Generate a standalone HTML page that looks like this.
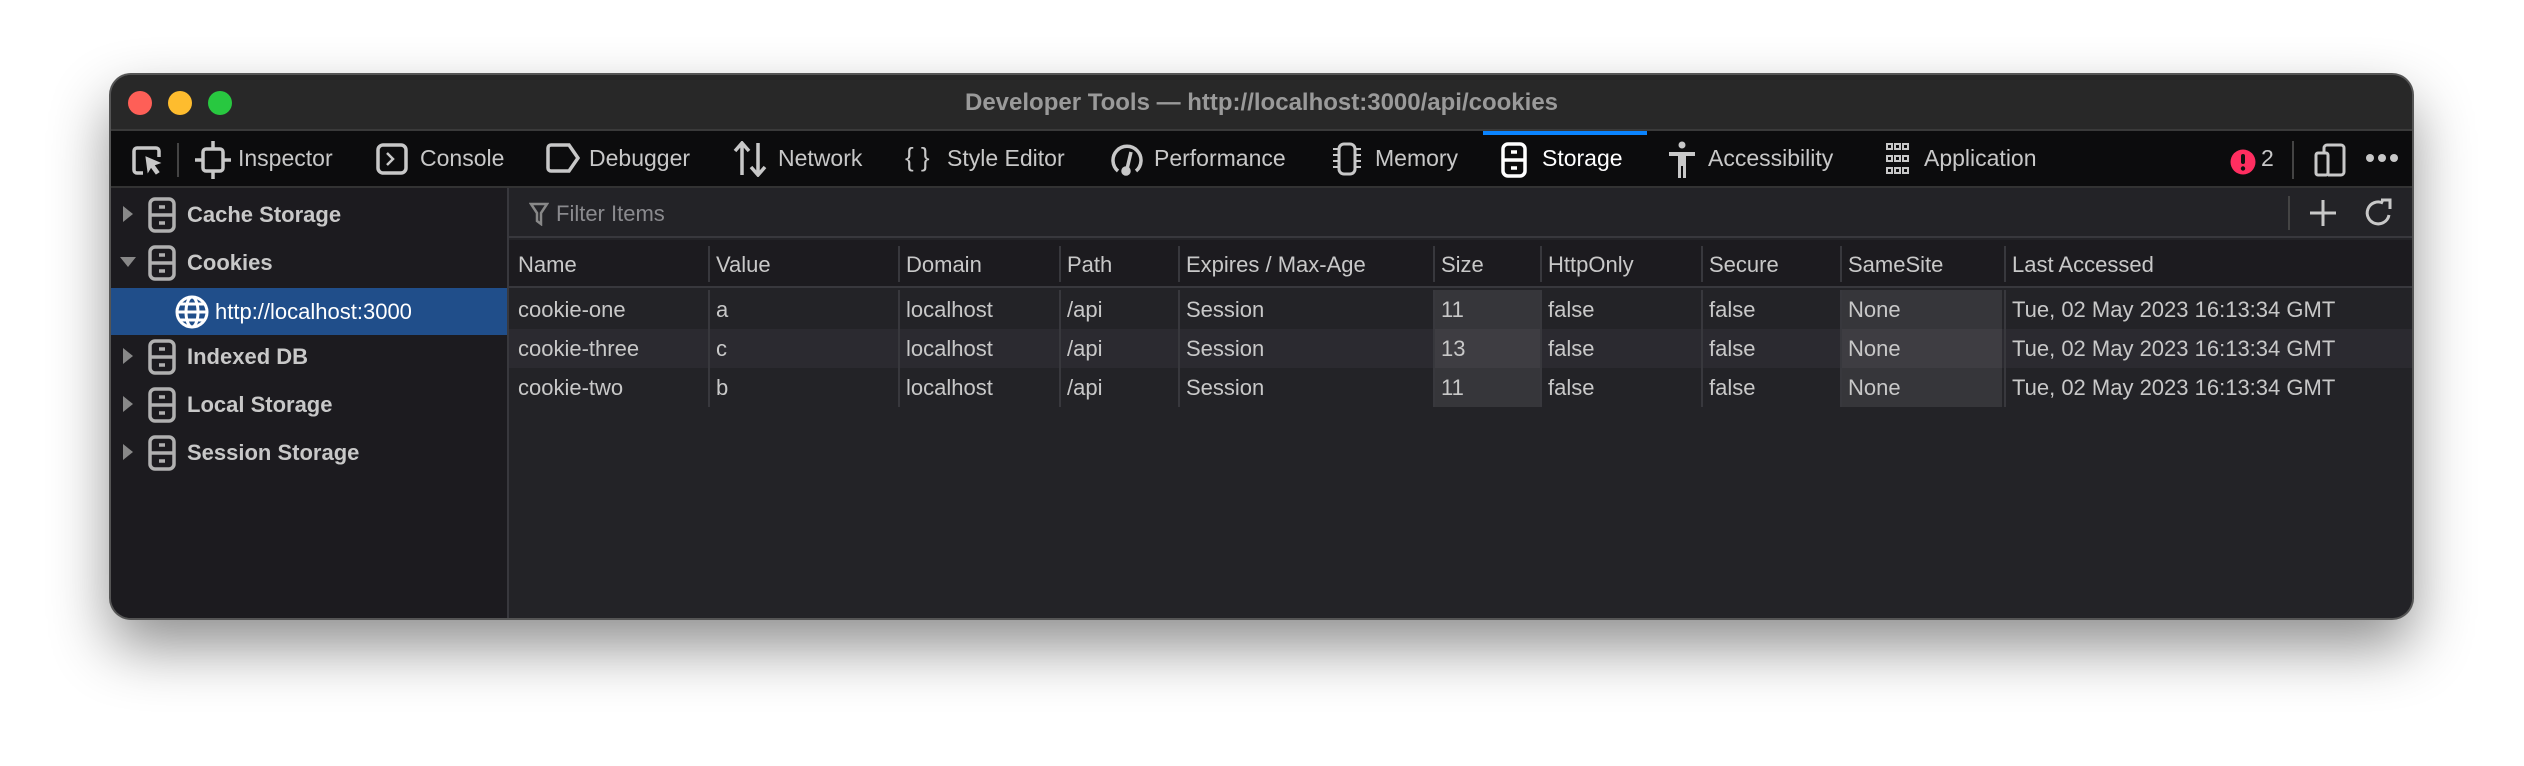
<!DOCTYPE html>
<html><head><meta charset="utf-8"><style>
*{margin:0;padding:0;box-sizing:border-box}
body{width:2524px;height:766px;background:#fff;position:relative;overflow:hidden;font-family:"Liberation Sans",sans-serif}
.win{position:absolute;left:111px;top:75px;width:2301px;height:543px;background:#232327;border-radius:20px;overflow:hidden;box-shadow:0 0 0 2px #555,0 28px 60px rgba(0,0,0,.45)}
.title{position:absolute;left:0;top:0;width:100%;height:56px;background:#282828;border-bottom:2px solid #3a3a3a}
.tl{position:absolute;top:16px;width:24px;height:24px;border-radius:50%}
.title .t{position:absolute;left:0;width:100%;top:14px;text-align:center;font-weight:bold;font-size:24px;color:#9a9a9a}
.tb{position:absolute;left:0;top:56px;width:100%;height:57px;background:#0c0c0d;border-bottom:2px solid #333}
.tab{position:absolute;top:14px;font-size:23px;color:#c8c8c8;white-space:nowrap}
.ic{position:absolute;top:12px}
.side{position:absolute;left:0;top:113px;width:398px;height:430px;background:#1c1b1f;border-right:2px solid #38383d}
.si{position:absolute;left:0;width:396px;height:46px;font-size:22px;font-weight:bold;color:#c8c8c8}
.si span{position:absolute;left:76px;top:10px}
.main{position:absolute;left:398px;top:113px;right:0;bottom:0;background:#232327}
.filter{position:absolute;left:0;top:0;width:100%;height:50px;border-bottom:2px solid #38383d}
.hdr{position:absolute;left:0;top:52px;width:100%;height:48px;background:#1c1b1f;border-bottom:2px solid #38383d}
.cell{position:absolute;font-size:22px;color:#c8c8c8;white-space:nowrap}
.row{position:absolute;left:0;width:100%;height:39px}
.sep{position:absolute;width:2px;background:#38383d}
</style></head><body>
<div class="win">
 <div class="title">
  <div class="tl" style="left:17px;background:#fe5f57"></div>
  <div class="tl" style="left:57px;background:#febc2e"></div>
  <div class="tl" style="left:97px;background:#28c840"></div>
  <div class="t">Developer Tools — http://localhost:3000/api/cookies</div>
 </div>
 <div class="tb">
  <div style="position:absolute;left:1372px;top:0;width:164px;height:4px;background:#0a84ff"></div>
  <svg class="ic" style="left:20px;top:14px" width="34" height="32" viewBox="0 0 34 32" fill="none" stroke="#c8c8c8" stroke-width="3.5"><path d="M12 28H6a3 3 0 0 1-3-3V6a3 3 0 0 1 3-3h19a3 3 0 0 1 3 3v6"/><path d="M15 12l14 6-6 2 5 7-3 2-5-7-3 5z" fill="#c8c8c8" stroke-width="1"/></svg>
  <div style="position:absolute;left:66px;top:12px;width:2px;height:34px;background:#444"></div>
  <svg class="ic" style="left:84px;top:10px" width="36" height="38" viewBox="0 0 36 38" fill="none" stroke="#c8c8c8" stroke-width="3.5"><rect x="8" y="8" width="20" height="22" rx="3"/><path d="M18 0v8M18 30v8M0 19h8M28 19h8"/></svg>
  <div class="tab" style="left:127px">Inspector</div>
  <svg class="ic" style="left:265px;top:12px" width="32" height="32" viewBox="0 0 32 32" fill="none" stroke="#c8c8c8" stroke-width="3.5"><rect x="2" y="2" width="28" height="28" rx="5"/><path d="M11 10l6 6-6 6" stroke-width="2.5"/></svg>
  <div class="tab" style="left:309px">Console</div>
  <svg class="ic" style="left:435px;top:12px" width="34" height="30" viewBox="0 0 34 30" fill="none" stroke="#c8c8c8" stroke-width="3.5"><path d="M5 2h18l9 13-9 13H5a3 3 0 0 1-3-3V5a3 3 0 0 1 3-3z"/></svg>
  <div class="tab" style="left:478px">Debugger</div>
  <svg class="ic" style="left:622px;top:10px" width="34" height="36" viewBox="0 0 34 36" fill="none" stroke="#c8c8c8" stroke-width="3.5"><path d="M9 34V3M2 10l7-8 7 8M25 2v31M18 26l7 8 7-8"/></svg>
  <div class="tab" style="left:667px">Network</div>
  <div class="tab" style="left:794px;font-size:26px;top:11px">{ }</div>
  <div class="tab" style="left:836px">Style Editor</div>
  <svg class="ic" style="left:1000px;top:10px" width="32" height="36" viewBox="0 0 32 36" fill="none" stroke="#c8c8c8" stroke-width="3.5"><path d="M7 30A14 14 0 1 1 25 30"/><path d="M20 11l-4 17"/><circle cx="15" cy="30" r="3" fill="#c8c8c8"/></svg>
  <div class="tab" style="left:1043px">Performance</div>
  <svg class="ic" style="left:1220px;top:10px" width="32" height="36" viewBox="0 0 32 36" fill="none" stroke="#c8c8c8" stroke-width="3"><rect x="8" y="3" width="16" height="30" rx="5"/><path d="M2 8h5M2 14h5M2 20h5M2 26h5M25 8h5M25 14h5M25 20h5M25 26h5" stroke-width="2"/></svg>
  <div class="tab" style="left:1264px">Memory</div>
  <svg class="ic" style="left:1390px;top:11px" width="26" height="36" viewBox="0 0 26 36" fill="none" stroke="#fff" stroke-width="3.5"><rect x="2" y="2" width="22" height="32" rx="5"/><path d="M2 18h22M10 10h6M10 26h6"/></svg>
  <div class="tab" style="left:1431px;color:#fff">Storage</div>
  <svg class="ic" style="left:1556px;top:10px" width="30" height="38" viewBox="0 0 30 38" fill="#c8c8c8"><circle cx="15" cy="4" r="3.5"/><path d="M2 11h26v4h-9v22h-3V25h-2v12h-3V15H2z"/></svg>
  <div class="tab" style="left:1597px">Accessibility</div>
  <svg class="ic" style="left:1774px;top:11px" width="26" height="34" viewBox="0 0 26 34" fill="none" stroke="#c8c8c8" stroke-width="2"><rect x="2" y="2" width="5" height="5"/><rect x="10" y="2" width="5" height="5"/><rect x="18" y="2" width="5" height="5"/><rect x="2" y="14" width="5" height="5"/><rect x="10" y="14" width="5" height="5"/><rect x="18" y="14" width="5" height="5"/><rect x="2" y="26" width="5" height="5"/><rect x="10" y="26" width="5" height="5"/><rect x="18" y="26" width="5" height="5"/></svg>
  <div class="tab" style="left:1813px">Application</div>
  <svg class="ic" style="left:2119px;top:18px" width="26" height="26" viewBox="0 0 26 26"><circle cx="13" cy="13" r="12.5" fill="#ff2e60"/><rect x="11" y="5" width="4" height="10" rx="2" fill="#111"/><circle cx="13" cy="19.5" r="2.2" fill="#111"/></svg>
  <div class="tab" style="left:2150px">2</div>
  <div style="position:absolute;left:2181px;top:10px;width:2px;height:38px;background:#444"></div>
  <svg class="ic" style="left:2203px;top:12px" width="32" height="34" viewBox="0 0 32 34" fill="none" stroke="#c8c8c8" stroke-width="3"><rect x="2" y="10" width="12" height="22" rx="2"/><path d="M10 10V5a3 3 0 0 1 3-3h14a3 3 0 0 1 3 3v24a3 3 0 0 1-3 3H14"/></svg>
  <svg class="ic" style="left:2254px;top:22px" width="34" height="10" viewBox="0 0 34 10" fill="#c8c8c8"><circle cx="5" cy="5" r="4"/><circle cx="17" cy="5" r="4"/><circle cx="29" cy="5" r="4"/></svg>
 </div>
 <div class="side">
  <div class="si" style="top:4px"><svg style="position:absolute;left:12px;top:14px" width="10" height="16"><path d="M0 0l10 8-10 8z" fill="#888"/></svg><svg style="position:absolute;left:37px;top:5px" width="28" height="36" viewBox="0 0 28 36" fill="none" stroke="#b0b0b0" stroke-width="3.5"><rect x="2" y="2" width="24" height="32" rx="5"/><path d="M2 18h24M11 10h6M11 26h6"/></svg><span>Cache Storage</span></div>
  <div class="si" style="top:52px"><svg style="position:absolute;left:9px;top:17px" width="16" height="10"><path d="M0 0h16l-8 10z" fill="#888"/></svg><svg style="position:absolute;left:37px;top:5px" width="28" height="36" viewBox="0 0 28 36" fill="none" stroke="#b0b0b0" stroke-width="3.5"><rect x="2" y="2" width="24" height="32" rx="5"/><path d="M2 18h24M11 10h6M11 26h6"/></svg><span>Cookies</span></div>
  <div class="si" style="top:100px;background:#204e8a;color:#fff;height:47px"><svg style="position:absolute;left:64px;top:7px" width="34" height="34" viewBox="0 0 34 34" fill="none" stroke="#fff" stroke-width="3"><circle cx="17" cy="17" r="15"/><ellipse cx="17" cy="17" rx="6" ry="15"/><path d="M2 17h30M5 9h24M5 25h24"/></svg><span style="left:104px;font-weight:normal;top:11px">http://localhost:3000</span></div>
  <div class="si" style="top:146px"><svg style="position:absolute;left:12px;top:14px" width="10" height="16"><path d="M0 0l10 8-10 8z" fill="#888"/></svg><svg style="position:absolute;left:37px;top:5px" width="28" height="36" viewBox="0 0 28 36" fill="none" stroke="#b0b0b0" stroke-width="3.5"><rect x="2" y="2" width="24" height="32" rx="5"/><path d="M2 18h24M11 10h6M11 26h6"/></svg><span>Indexed DB</span></div>
  <div class="si" style="top:194px"><svg style="position:absolute;left:12px;top:14px" width="10" height="16"><path d="M0 0l10 8-10 8z" fill="#888"/></svg><svg style="position:absolute;left:37px;top:5px" width="28" height="36" viewBox="0 0 28 36" fill="none" stroke="#b0b0b0" stroke-width="3.5"><rect x="2" y="2" width="24" height="32" rx="5"/><path d="M2 18h24M11 10h6M11 26h6"/></svg><span>Local Storage</span></div>
  <div class="si" style="top:242px"><svg style="position:absolute;left:12px;top:14px" width="10" height="16"><path d="M0 0l10 8-10 8z" fill="#888"/></svg><svg style="position:absolute;left:37px;top:5px" width="28" height="36" viewBox="0 0 28 36" fill="none" stroke="#b0b0b0" stroke-width="3.5"><rect x="2" y="2" width="24" height="32" rx="5"/><path d="M2 18h24M11 10h6M11 26h6"/></svg><span>Session Storage</span></div>
 </div>
 <div class="main">
  <div class="filter">
   <svg style="position:absolute;left:20px;top:14px" width="20" height="24" viewBox="0 0 20 24" fill="none" stroke="#888" stroke-width="2.5"><path d="M2 2h16l-6 9v11l-4-3v-8z"/></svg>
   <div class="cell" style="left:47px;top:13px;color:#8a8a8e">Filter Items</div>
   <div style="position:absolute;left:1779px;top:8px;width:2px;height:34px;background:#444"></div>
   <svg style="position:absolute;left:1800px;top:11px" width="28" height="28" viewBox="0 0 28 28" stroke="#c8c8c8" stroke-width="3"><path d="M14 1v26M1 14h26"/></svg>
   <svg style="position:absolute;left:1855px;top:10px" width="30" height="30" viewBox="0 0 30 30" fill="none" stroke="#c8c8c8" stroke-width="3"><path d="M25 17A11 11 0 1 1 19 5"/><path d="M17 2h9v9" stroke-width="3"/></svg>
  </div>
  <div class="hdr"></div>
  <div class="row" style="top:102px;background:#232327"></div>
  <div class="row" style="top:141px;background:#2b2a30"></div>
  <div class="row" style="top:180px;background:#232327"></div>
  <div style="position:absolute;left:924px;top:102px;width:107px;height:117px;background:rgba(255,255,255,.09)"></div>
  <div style="position:absolute;left:1331px;top:102px;width:162px;height:117px;background:rgba(255,255,255,.09)"></div>
  <div class="sep" style="left:199px;top:58px;height:36px"></div><div class="sep" style="left:199px;top:102px;height:117px"></div>
  <div class="sep" style="left:389px;top:58px;height:36px"></div><div class="sep" style="left:389px;top:102px;height:117px"></div>
  <div class="sep" style="left:550px;top:58px;height:36px"></div><div class="sep" style="left:550px;top:102px;height:117px"></div>
  <div class="sep" style="left:669px;top:58px;height:36px"></div><div class="sep" style="left:669px;top:102px;height:117px"></div>
  <div class="sep" style="left:924px;top:58px;height:36px"></div><div class="sep" style="left:924px;top:102px;height:117px"></div>
  <div class="sep" style="left:1031px;top:58px;height:36px"></div><div class="sep" style="left:1031px;top:102px;height:117px"></div>
  <div class="sep" style="left:1192px;top:58px;height:36px"></div><div class="sep" style="left:1192px;top:102px;height:117px"></div>
  <div class="sep" style="left:1331px;top:58px;height:36px"></div><div class="sep" style="left:1331px;top:102px;height:117px"></div>
  <div class="sep" style="left:1495px;top:58px;height:36px"></div><div class="sep" style="left:1495px;top:102px;height:117px"></div>
  <div class="cell" style="left:9px;top:64px">Name</div>
  <div class="cell" style="left:207px;top:64px">Value</div>
  <div class="cell" style="left:397px;top:64px">Domain</div>
  <div class="cell" style="left:558px;top:64px">Path</div>
  <div class="cell" style="left:677px;top:64px">Expires / Max-Age</div>
  <div class="cell" style="left:932px;top:64px">Size</div>
  <div class="cell" style="left:1039px;top:64px">HttpOnly</div>
  <div class="cell" style="left:1200px;top:64px">Secure</div>
  <div class="cell" style="left:1339px;top:64px">SameSite</div>
  <div class="cell" style="left:1503px;top:64px">Last Accessed</div>

  <div class="cell" style="left:9px;top:109px">cookie-one</div>
  <div class="cell" style="left:207px;top:109px">a</div>
  <div class="cell" style="left:397px;top:109px">localhost</div>
  <div class="cell" style="left:558px;top:109px">/api</div>
  <div class="cell" style="left:677px;top:109px">Session</div>
  <div class="cell" style="left:932px;top:109px">11</div>
  <div class="cell" style="left:1039px;top:109px">false</div>
  <div class="cell" style="left:1200px;top:109px">false</div>
  <div class="cell" style="left:1339px;top:109px">None</div>
  <div class="cell" style="left:1503px;top:109px">Tue, 02 May 2023 16:13:34 GMT</div>

  <div class="cell" style="left:9px;top:148px">cookie-three</div>
  <div class="cell" style="left:207px;top:148px">c</div>
  <div class="cell" style="left:397px;top:148px">localhost</div>
  <div class="cell" style="left:558px;top:148px">/api</div>
  <div class="cell" style="left:677px;top:148px">Session</div>
  <div class="cell" style="left:932px;top:148px">13</div>
  <div class="cell" style="left:1039px;top:148px">false</div>
  <div class="cell" style="left:1200px;top:148px">false</div>
  <div class="cell" style="left:1339px;top:148px">None</div>
  <div class="cell" style="left:1503px;top:148px">Tue, 02 May 2023 16:13:34 GMT</div>

  <div class="cell" style="left:9px;top:187px">cookie-two</div>
  <div class="cell" style="left:207px;top:187px">b</div>
  <div class="cell" style="left:397px;top:187px">localhost</div>
  <div class="cell" style="left:558px;top:187px">/api</div>
  <div class="cell" style="left:677px;top:187px">Session</div>
  <div class="cell" style="left:932px;top:187px">11</div>
  <div class="cell" style="left:1039px;top:187px">false</div>
  <div class="cell" style="left:1200px;top:187px">false</div>
  <div class="cell" style="left:1339px;top:187px">None</div>
  <div class="cell" style="left:1503px;top:187px">Tue, 02 May 2023 16:13:34 GMT</div>
 </div>
</div>
</body></html>
